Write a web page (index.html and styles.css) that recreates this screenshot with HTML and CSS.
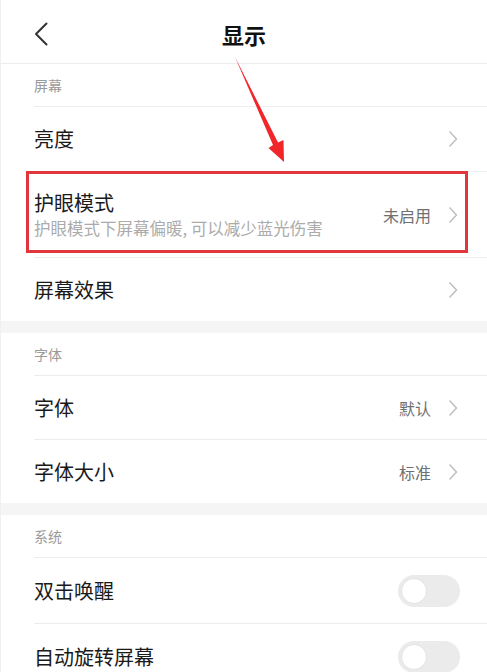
FILE: index.html
```html
<!DOCTYPE html>
<html lang="zh-CN">
<head>
<meta charset="utf-8">
<title>显示</title>
<link rel="stylesheet" href="styles.css">
</head>
<body>
<div class="page">
  <header class="topbar">
    <div class="back">
      <svg width="14" height="24" viewBox="0 0 14 24"><path d="M12.5 1.5 L2 12 L12.5 22.5" fill="none" stroke="#333" stroke-width="2" stroke-linecap="round" stroke-linejoin="round"/></svg>
    </div>
    <div class="title">显示</div>
    <div></div>
  </header>

  <section class="group">
    <div class="label">屏幕</div>
    <div class="item">
      <div class="text"><div class="name">亮度</div></div>
      <div class="right"><svg class="chev" width="10" height="18" viewBox="0 0 10 18"><path d="M1.5 1.5 L8.5 9 L1.5 16.5" fill="none" stroke="#bdbdbd" stroke-width="1.4"/></svg></div>
    </div>
    <div class="item tall">
      <div class="text"><div class="name">护眼模式</div><div class="sub">护眼模式下屏幕偏暖, 可以减少蓝光伤害</div></div>
      <div class="right"><span class="value">未启用</span><svg class="chev" width="10" height="18" viewBox="0 0 10 18"><path d="M1.5 1.5 L8.5 9 L1.5 16.5" fill="none" stroke="#bdbdbd" stroke-width="1.4"/></svg></div>
    </div>
    <div class="item short">
      <div class="text"><div class="name">屏幕效果</div></div>
      <div class="right"><svg class="chev" width="10" height="18" viewBox="0 0 10 18"><path d="M1.5 1.5 L8.5 9 L1.5 16.5" fill="none" stroke="#bdbdbd" stroke-width="1.4"/></svg></div>
    </div>
  </section>

  <div class="band"></div>

  <section class="group">
    <div class="label">字体</div>
    <div class="item short">
      <div class="text"><div class="name">字体</div></div>
      <div class="right"><span class="value">默认</span><svg class="chev" width="10" height="18" viewBox="0 0 10 18"><path d="M1.5 1.5 L8.5 9 L1.5 16.5" fill="none" stroke="#bdbdbd" stroke-width="1.4"/></svg></div>
    </div>
    <div class="item short">
      <div class="text"><div class="name">字体大小</div></div>
      <div class="right"><span class="value">标准</span><svg class="chev" width="10" height="18" viewBox="0 0 10 18"><path d="M1.5 1.5 L8.5 9 L1.5 16.5" fill="none" stroke="#bdbdbd" stroke-width="1.4"/></svg></div>
    </div>
  </section>

  <div class="band"></div>

  <section class="group">
    <div class="label">系统</div>
    <div class="item sw">
      <div class="text"><div class="name">双击唤醒</div></div>
      <div class="right"><span class="toggle"><span class="knob"></span></span></div>
    </div>
    <div class="item sw">
      <div class="text"><div class="name">自动旋转屏幕</div></div>
      <div class="right"><span class="toggle"><span class="knob"></span></span></div>
    </div>
  </section>

  <div class="highlight"></div>
  <svg class="arrow" width="487" height="200" viewBox="0 0 487 200">
    <polygon points="234,57 277,142.5 282.5,140 283,162 267.5,148 272,145" fill="#f0262b"/>
  </svg>
</div>
</body>
</html>
```

FILE: styles.css
```css
* { box-sizing: border-box; }
html, body { margin: 0; padding: 0; background: #fff; }
body {
  font-family: "Noto Sans CJK SC", "Noto Sans", sans-serif;
  color: #1e1e1e;
}
.page {
  position: relative;
  width: 487px;
  height: 672px;
  overflow: hidden;
  border-left: 1px solid #f0f0f0;
}
.topbar {
  display: grid;
  grid-template-columns: 1fr auto 1fr;
  align-items: center;
  height: 64px;
  border-bottom: 1px solid #ececec;
}
.back {
  padding-left: 33px;
  padding-top: 4px;
  display: flex;
  align-items: center;
}
.title {
  font-size: 22px;
  font-weight: 700;
  color: #111;
  padding-top: 5px;
}
.group { padding-left: 33px; }
.label {
  height: 42px;
  display: flex;
  align-items: center;
  font-size: 14px;
  color: #9a9a9a;
}
.item {
  display: flex;
  align-items: center;
  justify-content: space-between;
  height: 65px;
  border-top: 1px solid #ededed;
  padding-right: 29px;
}
.item.short { height: 64px; }
.item.tall { height: 86px; }
.item.sw { height: 66px; padding-right: 27px; }
.name {
  font-size: 20px;
  line-height: 26px;
  color: #1a1a1a;
}
.sub {
  font-size: 16.5px;
  line-height: 22px;
  color: #ababab;
  margin-top: 1px;
}
.right {
  display: flex;
  align-items: center;
  gap: 17px;
}
.value {
  font-size: 16px;
  color: #707070;
}
.chev { display: block; }
.band {
  height: 12px;
  background: #f5f5f5;
}
.toggle {
  position: relative;
  display: block;
  width: 62px;
  height: 32px;
  border-radius: 16px;
  background: #ebebeb;
}
.knob {
  position: absolute;
  left: 3px;
  top: 3px;
  width: 26px;
  height: 26px;
  border-radius: 50%;
  background: #fff;
  border: 1px solid #e2e2e2;
}
.highlight {
  position: absolute;
  left: 25px;
  top: 171px;
  width: 442px;
  height: 82px;
  border: 3px solid #e0373c;
  pointer-events: none;
}
.arrow {
  position: absolute;
  left: 0;
  top: 0;
  pointer-events: none;
}
```
